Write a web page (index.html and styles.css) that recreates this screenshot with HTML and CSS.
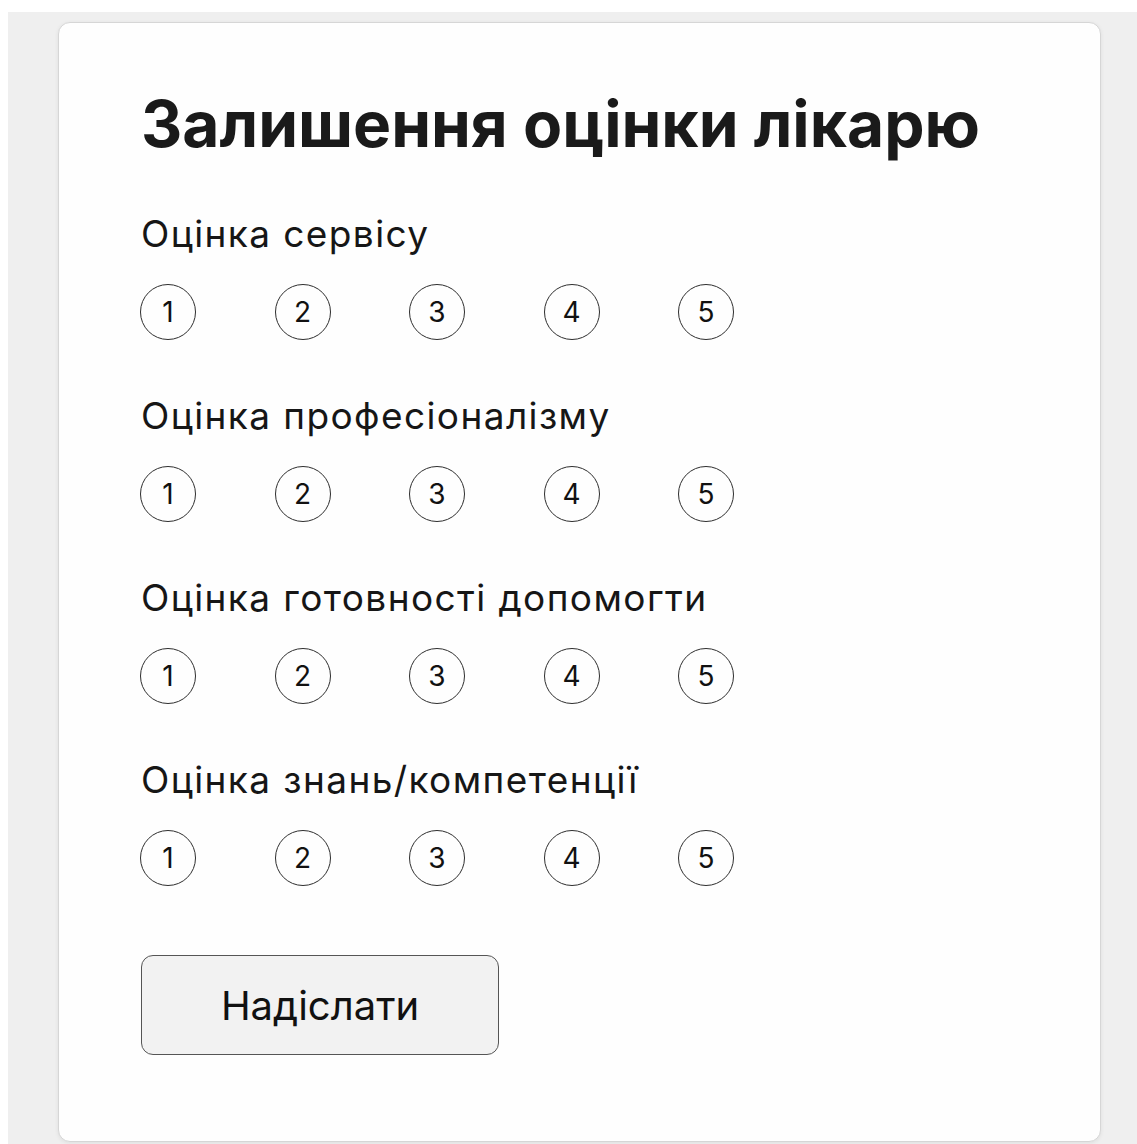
FILE: index.html
```html
<!DOCTYPE html>
<html lang="uk">
<head>
<meta charset="utf-8">
<title>Залишення оцінки лікарю</title>
<link rel="stylesheet" href="styles.css">
</head>
<body>
  <main class="card">
    <h1 class="title">Залишення оцінки лікарю</h1>
    <form class="form">
      <fieldset class="group">
        <legend class="label">Оцінка сервісу</legend>
        <div class="scale">
          <span class="dot">1</span><span class="dot">2</span><span class="dot">3</span><span class="dot">4</span><span class="dot">5</span>
        </div>
      </fieldset>
      <fieldset class="group">
        <legend class="label">Оцінка професіоналізму</legend>
        <div class="scale">
          <span class="dot">1</span><span class="dot">2</span><span class="dot">3</span><span class="dot">4</span><span class="dot">5</span>
        </div>
      </fieldset>
      <fieldset class="group">
        <legend class="label">Оцінка готовності допомогти</legend>
        <div class="scale">
          <span class="dot">1</span><span class="dot">2</span><span class="dot">3</span><span class="dot">4</span><span class="dot">5</span>
        </div>
      </fieldset>
      <fieldset class="group">
        <legend class="label">Оцінка знань/компетенції</legend>
        <div class="scale">
          <span class="dot">1</span><span class="dot">2</span><span class="dot">3</span><span class="dot">4</span><span class="dot">5</span>
        </div>
      </fieldset>
      <button type="button" class="submit">Надіслати</button>
    </form>
  </main>
</body>
</html>
```
FILE: styles.css
```css
html {
  background: #ffffff;
  height: 100%;
}

body {
  margin: 12px 0 0 8px;
  height: calc(100% - 12px);
  overflow: hidden;
  background: #efefef;
  font-family: Inter, "Liberation Sans", Arial, sans-serif;
  color: #141414;
}

.card {
  box-sizing: border-box;
  margin: 10px 36px 0 50px;
  height: 1120px;
  padding: 63px 0 0 82px;
  background: #fefefe;
  border: 1px solid #d6d6d6;
  border-radius: 12px;
  box-shadow: 0 1px 4px rgba(0, 0, 0, 0.07);
}

.title {
  margin: 0 0 52px;
  font-size: 64px;
  line-height: 76px;
  font-weight: 700;
  color: #1a1a1a;
}

.form {
  display: flex;
  flex-direction: column;
  gap: 56px;
}

.group {
  margin: 0;
  padding: 0;
  border: 0;
  display: flex;
  flex-direction: column;
  gap: 30px;
}

.label {
  padding: 0;
  float: left;
  font-size: 37px;
  line-height: 40px;
  letter-spacing: 1.4px;
  font-weight: 400;
  color: #161616;
}

.scale {
  clear: both;
  display: flex;
  gap: 78.5px;
  margin-left: -1px;
}

.dot {
  box-sizing: border-box;
  width: 56px;
  height: 56px;
  border: 1.5px solid #2e2e2e;
  border-radius: 50%;
  display: flex;
  align-items: center;
  justify-content: center;
  font-size: 28px;
  color: #111;
}

.submit {
  align-self: flex-start;
  margin-top: 13px;
  width: 358px;
  height: 100px;
  background: #f2f2f2;
  border: 1.5px solid #555;
  border-radius: 12px;
  font-family: inherit;
  font-size: 40px;
  color: #111;
}
```
